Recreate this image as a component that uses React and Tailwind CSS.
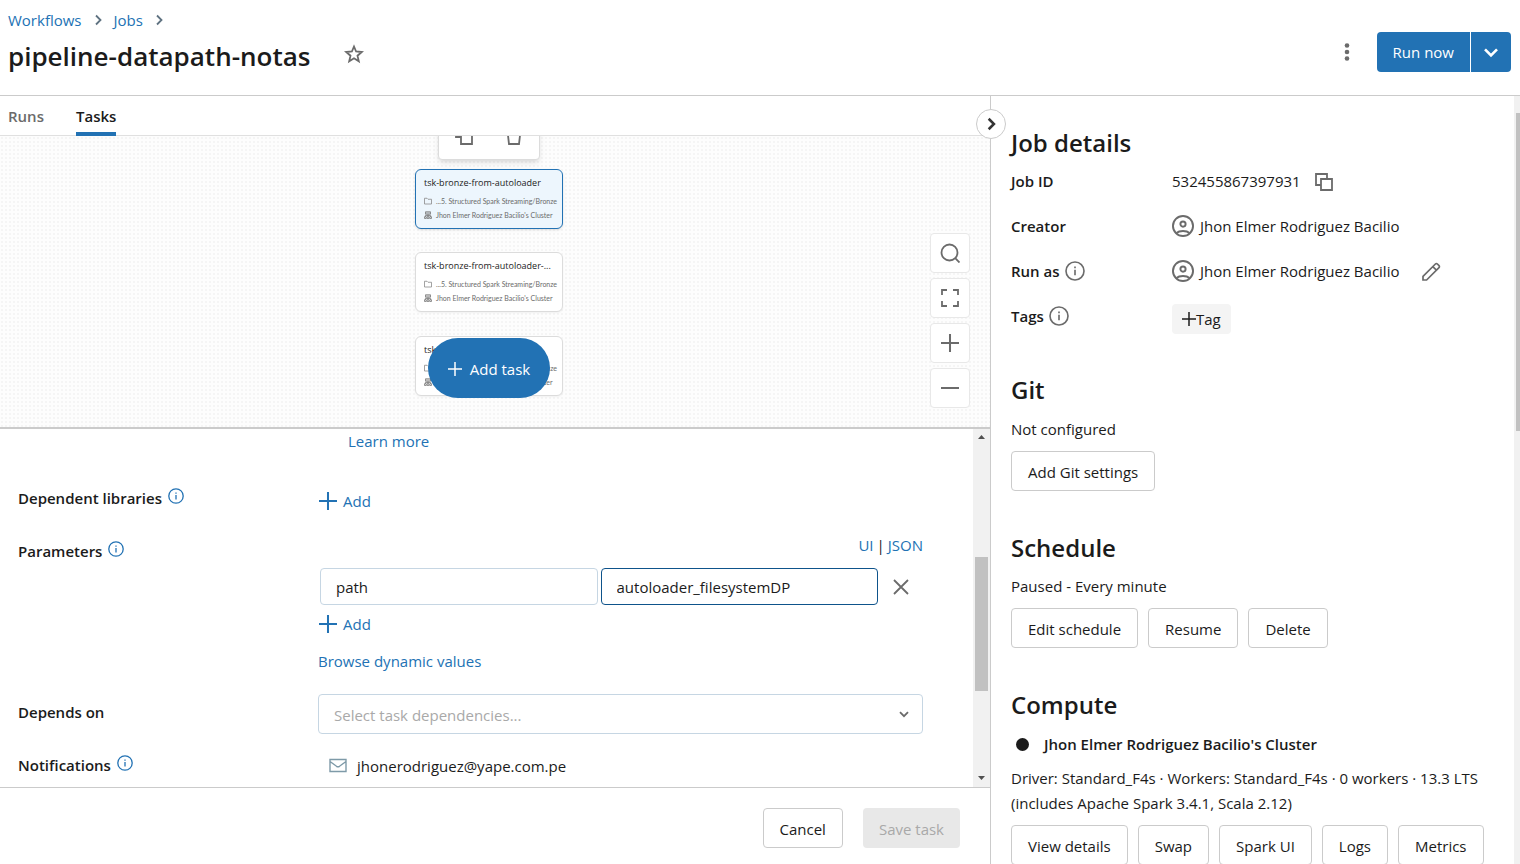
import React from "react";

const Svg = ({ size = 16, className = "", children, box = 16 }) => (
  <svg width={size} height={size} viewBox={`0 0 ${box} ${box}`} fill="none" stroke="currentColor" className={`shrink-0 ${className}`} aria-hidden="true">
    {children}
  </svg>
);

const Info = ({ size = 16, className = "" }) => (
  <Svg size={size} className={className}>
    <circle cx="8" cy="8" r="7.2" strokeWidth="1.3" />
    <path d="M8 7v4.4M8 4.4v1.4" strokeWidth="1.3" />
  </Svg>
);

const Plus = ({ size = 16, className = "", w = 1.8 }) => (
  <Svg size={size} className={className}>
    <path d="M8 0v16M0 8h16" strokeWidth={w} />
  </Svg>
);

const Chevron = ({ size = 12, className = "", d = "M4 1.5 8.5 6 4 10.5", w = 2 }) => (
  <Svg size={size} box={12} className={className}>
    <path d={d} strokeWidth={w} />
  </Svg>
);

const DOWN = "M1.5 4 6 8.5 10.5 4";
const DOWN_SMALL = "M2 4.2 6 8.2 10 4.2";

const User = () => (
  <Svg size={22} className="mb-0.5 text-[#6b6b6b]">
    <circle cx="8" cy="8" r="7.3" strokeWidth="1.4" />
    <circle cx="8" cy="6.6" r="1.9" strokeWidth="1.4" />
    <path d="M3.2 13.1C5.5 11.1 10.5 11.1 12.8 13.1" strokeWidth="1.4" />
  </Svg>
);

const Copy = () => (
  <Svg size={18} box={18} className="text-[#6b6b6b]">
    <path d="M6 12H1V1h11v5M6 6h11v11H6z" strokeWidth="1.8" />
  </Svg>
);

const Pencil = () => (
  <Svg size={20} box={20} className="text-[#6b6b6b]">
    <path d="M2 18v-3.6L14.4 2a1.4 1.4 0 0 1 2 0L18 3.6a1.4 1.4 0 0 1 0 2L5.600 18zM11.800 4.600l3.600 3.600" strokeWidth="1.7" />
  </Svg>
);

const Folder = () => (
  <Svg size={8} className="text-[#8a8a8a]">
    <path d="M1 2.500h5l2 2h7v9.500H1z" strokeWidth="1.6" />
  </Svg>
);

const Cluster = () => (
  <Svg size={8} className="text-[#7a7a7a]">
    <path d="M3 1.500h10v5H3zM3 4h10M8 6.500V9M2.700 12V9h10.600v3M8 9v3M1 11.500h3.500V15H1zM6.200 11.500h3.600V15H6.200zM11.500 11.500H15V15h-3.500z" strokeWidth="1.6" />
  </Svg>
);

const Btn = ({ children, className = "" }) => (
  <button type="button" className={`h-10 shrink-0 whitespace-nowrap rounded border border-[#cbcbcb] bg-white px-4 pt-0.5 ${className}`}>
    {children}
  </button>
);

const TaskNode = ({ title, selected, className }) => (
  <div
    className={`absolute left-[415px] flex h-[60px] w-[148px] flex-col rounded-md border px-2 pt-1.5 ${
      selected ? "border-[#2272b4] bg-[#edf6fd] shadow" : "border-[#dcdcdc] bg-white shadow-xs"
    } ${className}`}
  >
    <div className="whitespace-nowrap text-[9px] leading-[14px]">{title}</div>
    <div className="mt-1 flex items-center gap-1 whitespace-nowrap font-['Lato',sans-serif] text-[7px] leading-[14px] text-[#6b6b6b]">
      <Folder />
      ...5. Structured Spark Streaming/Bronze
    </div>
    <div className="flex items-center gap-1 whitespace-nowrap font-['Lato',sans-serif] text-[7px] leading-[14px] text-[#6b6b6b]">
      <Cluster />
      Jhon Elmer Rodriguez Bacilio's Cluster
    </div>
  </div>
);

const MapButton = ({ label, children }) => (
  <button type="button" aria-label={label} className="flex size-10 items-center justify-center rounded border border-[#e8e8e8] bg-white text-[#6b6b6b]">
    {children}
  </button>
);

const Detail = ({ label, info, children }) => (
  <div className="flex h-[45px] items-center">
    <div className="flex w-[161px] items-center gap-[5px] font-semibold">
      {label}
      {info && <Info size={20} className="mb-0.5 text-[#6b6b6b]" />}
    </div>
    {children}
  </div>
);

const FormLabel = ({ children, info, htmlFor }) => (
  <label htmlFor={htmlFor} className="flex w-[300px] shrink-0 items-start gap-1.5 font-semibold leading-6">
    {children}
    {info && <Info size={16} className="mt-0.5 text-[#2272b4]" />}
  </label>
);

const AddLink = () => (
  <button type="button" className="flex h-6 items-center gap-1.5 pl-px text-[#2272b4]">
    <Plus size={18} />
    Add
  </button>
);

const Heading = ({ children }) => <h2 className="text-2xl font-semibold leading-8">{children}</h2>;

export default function App() {
  return (
    <div className="flex h-screen flex-col overflow-hidden bg-white font-['Open_Sans','Noto_Sans',sans-serif] text-[15px] text-[#1b1b1b]">
      <header className="flex h-24 shrink-0 items-center justify-between border-b border-[#cbcbcb] pl-2 pr-[9px]">
        <div className="flex h-full flex-col pt-2">
          <nav className="flex h-6 items-center gap-2.5 text-[#2272b4]">
            <a href="#workflows">Workflows</a>
            <Chevron className="text-[#5f7281]" w={1.8} />
            <a href="#jobs">Jobs</a>
            <Chevron className="text-[#5f7281]" w={1.8} />
          </nav>
          <div className="mt-1 flex h-10 items-center gap-[34px]">
            <h1 className="whitespace-nowrap text-[26px] font-semibold leading-10">pipeline-datapath-notas</h1>
            <button type="button" aria-label="Favorite" className="mb-1">
              <Svg size={20} box={20} className="text-[#6b6b6b]">
                <path d="m10 2.500 2.100 5 5.700.5-4.300 3.700 1.300 5.600L10 14.300l-4.800 3 1.300-5.600L2.200 8l5.700-.5z" strokeWidth="1.8" />
              </Svg>
            </button>
          </div>
        </div>
        <div className="mt-2 flex items-center gap-5">
          <button type="button" aria-label="More actions" className="flex size-5 items-center justify-center text-[#6b6b6b]">
            <svg width="6" height="20" viewBox="0 0 6 20" fill="currentColor" aria-hidden="true">
              <circle cx="3" cy="3.500" r="2.300" />
              <circle cx="3" cy="10" r="2.300" />
              <circle cx="3" cy="16.500" r="2.300" />
            </svg>
          </button>
          <div className="flex gap-px">
            <button type="button" className="h-10 rounded-l bg-[#2272b4] px-4 pt-0.5 text-white">Run now</button>
            <button type="button" aria-label="Run options" className="flex h-10 w-10 items-center justify-center rounded-r bg-[#2272b4] text-white">
              <Chevron size={16} d={DOWN} w={2} />
            </button>
          </div>
        </div>
      </header>

      <div className="flex min-h-0 flex-1">
        <main className="flex min-w-0 flex-1 flex-col">
          <div className="flex h-10 shrink-0 gap-8 border-b border-[#e0e0e0] pl-2 font-semibold">
            <button type="button" className="h-10 text-[#6b6b6b]">Runs</button>
            <button type="button" className="h-10 border-b-4 border-[#2272b4] pt-1">Tasks</button>
          </div>

          <section className="relative h-[293px] shrink-0 overflow-hidden border-b-2 border-[#cbcbcb] bg-[#fdfdfd] bg-[radial-gradient(#f5f5f5_1px,transparent_1px)] bg-[size:4px_4px]">
            <div className="absolute left-[438px] top-[-16px] flex h-10 w-[102px] items-center justify-center gap-8 rounded border border-[#dcdcdc] bg-white pb-2 text-[#6b6b6b] shadow-md">
              <Svg size={18} box={18}>
                <path d="M6 10H1V1h10v4M6 5h11v12H6z" strokeWidth="1.800" />
              </Svg>
              <Svg size={18} box={18}>
                <path d="M1 4h16M2.500 4l1.500 13h10l1.500-13M6 4V1h6v3" strokeWidth="1.800" />
              </Svg>
            </div>
            <TaskNode title="tsk-bronze-from-autoloader" selected className="top-[33px]" />
            <TaskNode title="tsk-bronze-from-autoloader-..." className="top-[116px]" />
            <TaskNode title="tsk-silver-from-bronze" className="top-[200px]" />
            <button type="button" className="absolute left-[428px] top-[202px] flex h-[60px] w-[122px] items-center justify-center gap-2 rounded-full bg-[#2272b4] pt-0.5 text-white">
              <Plus size={14} w={1.7} />
              Add task
            </button>
            <div className="absolute right-5 top-[97px] flex flex-col gap-[5px]">
              <MapButton label="Search">
                <Svg size={20} box={20}>
                  <circle cx="9.500" cy="9.500" r="8" strokeWidth="1.800" />
                  <path d="m15.200 15.200 4.300 4.300" strokeWidth="1.800" />
                </Svg>
              </MapButton>
              <MapButton label="Fit to screen">
                <Svg size={18} box={18}>
                  <path d="M1 6V1h5M12 1h5v5M17 12v5h-5M6 17H1v-5" strokeWidth="1.800" />
                </Svg>
              </MapButton>
              <MapButton label="Zoom in">
                <Plus size={18} />
              </MapButton>
              <MapButton label="Zoom out">
                <Svg size={18}>
                  <path d="M0 8h16" strokeWidth="1.800" />
                </Svg>
              </MapButton>
            </div>
          </section>

          <div className="flex min-h-0 flex-1">
            <form className="flex min-w-0 flex-1 flex-col overflow-hidden pl-[18px] pr-[50px]">
              <a href="#learn" className="ml-[330px] h-6 leading-6 text-[#2272b4]">Learn more</a>
              <div className="mt-[33px] flex">
                <FormLabel info>Dependent libraries</FormLabel>
                <div className="pt-[3px]">
                  <AddLink />
                </div>
              </div>
              <div className="mt-5 flex">
                <div className="pt-1.5">
                  <FormLabel info htmlFor="param-key">Parameters</FormLabel>
                </div>
                <div className="min-w-0 flex-1">
                  <div className="flex h-6 items-center justify-end gap-[3px]">
                    <a href="#ui" className="text-[#2272b4]">UI</a>
                    <span>|</span>
                    <a href="#json" className="text-[#2272b4]">JSON</a>
                  </div>
                  <div className="mt-[11px] flex items-center gap-[3px] pl-0.5">
                    <input id="param-key" defaultValue="path" className="h-[37px] min-w-0 flex-1 rounded border border-[#c6d6e3] px-[15px] outline-none" />
                    <input aria-label="Parameter value" defaultValue="autoloader_filesystemDP" className="h-[37px] min-w-0 flex-1 rounded border border-[#0e538b] px-[15px] outline-none" />
                    <button type="button" aria-label="Remove parameter" className="flex w-[42px] items-center justify-center pr-0.5 text-[#6b6b6b]">
                      <Svg size={16}>
                        <path d="m1 1 14 14M15 1 1 15" strokeWidth="1.800" />
                      </Svg>
                    </button>
                  </div>
                  <div className="mt-[7px]">
                    <AddLink />
                  </div>
                  <a href="#dynamic" className="mt-[13px] block h-6 leading-6 text-[#2272b4]">Browse dynamic values</a>
                </div>
              </div>
              <div className="mt-[21px] flex">
                <div className="pt-1.5">
                  <FormLabel htmlFor="depends">Depends on</FormLabel>
                </div>
                <div className="grid min-w-0 flex-1 items-center">
                  <select id="depends" defaultValue="" className="col-start-1 row-start-1 h-10 appearance-none rounded border border-[#c6d6e3] bg-white px-[15px] pt-0.5 text-[#a9a9a9]">
                    <option value="">Select task dependencies...</option>
                  </select>
                  <Chevron className="pointer-events-none col-start-1 row-start-1 mr-[13px] justify-self-end text-[#6b6b6b]" d={DOWN_SMALL} w={1.8} />
                </div>
              </div>
              <div className="mt-[19px] flex">
                <FormLabel info>Notifications</FormLabel>
                <div className="flex h-6 items-center gap-2.5 pl-[11px] pt-0.5">
                  <Svg size={18} box={18} className="text-[#7e9aa8]">
                    <path d="M1 2.500h16v12H1zM1 4.500 7.500 9.300q1.500 1 3 0L17 4.500" strokeWidth="1.400" />
                  </Svg>
                  jhonerodriguez@yape.com.pe
                </div>
              </div>
            </form>
            <div className="flex w-[17px] shrink-0 flex-col items-center bg-[#f1f1f1] text-[#505050]">
              <svg width="7" height="17" viewBox="0 0 7 17" fill="currentColor" aria-hidden="true">
                <path d="M0 10h7L3.500 6z" />
              </svg>
              <div className="mt-[111px] h-[134px] w-[13px] bg-[#c1c1c1]" />
              <svg width="7" height="17" viewBox="0 0 7 17" fill="currentColor" className="mt-auto" aria-hidden="true">
                <path d="M0 6h7l-3.500 4z" />
              </svg>
            </div>
          </div>

          <footer className="flex h-[77px] shrink-0 items-start justify-end gap-5 border-t border-[#cbcbcb] pr-[30px] pt-5">
            <Btn>Cancel</Btn>
            <button type="button" disabled className="h-10 rounded bg-[#e8e8e8] px-4 pt-0.5 text-[#a9a9a9]">Save task</button>
          </footer>
        </main>

        <aside className="relative flex w-[530px] shrink-0 border-l border-[#cbcbcb]">
          <button type="button" aria-label="Collapse panel" className="absolute left-[-15px] top-[13px] flex size-[30px] items-center justify-center rounded-full border border-[#cbcbcb] bg-white text-[#333]">
            <Chevron size={14} w={2.2} />
          </button>
          <div className="min-w-0 flex-1 overflow-hidden pl-5 pr-5 pt-[31px]">
            <Heading>Job details</Heading>
            <Detail label="Job ID">
              <span>532455867397931</span>
              <button type="button" aria-label="Copy job ID" className="ml-3.5">
                <Copy />
              </button>
            </Detail>
            <Detail label="Creator">
              <div className="flex items-center gap-1.5">
                <User />
                Jhon Elmer Rodriguez Bacilio
              </div>
            </Detail>
            <Detail label="Run as" info>
              <div className="flex items-center gap-1.5">
                <User />
                Jhon Elmer Rodriguez Bacilio
              </div>
              <button type="button" aria-label="Edit run as" className="ml-[22px]">
                <Pencil />
              </button>
            </Detail>
            <Detail label="Tags" info>
              <button type="button" className="mt-1 flex h-[30px] items-center rounded bg-[#f4f4f4] px-2.5">
                <Plus size={14} w={1.7} />
                <span className="pt-0.5">Tag</span>
              </button>
            </Detail>

            <div className="mt-[35px]">
              <Heading>Git</Heading>
              <p className="mt-[11px] leading-6">Not configured</p>
              <Btn className="mt-2.5">Add Git settings</Btn>
            </div>

            <div className="mt-[41px]">
              <Heading>Schedule</Heading>
              <p className="mt-2.5 leading-6">Paused - Every minute</p>
              <div className="mt-2.5 flex gap-2.5">
                <Btn>Edit schedule</Btn>
                <Btn>Resume</Btn>
                <Btn>Delete</Btn>
              </div>
            </div>

            <div className="mt-[41px]">
              <Heading>Compute</Heading>
              <div className="mt-[11px] flex h-6 items-center gap-[15px] pl-[5px] font-semibold">
                <span className="size-[13px] rounded-full bg-[#1b1b1b]" />
                Jhon Elmer Rodriguez Bacilio's Cluster
              </div>
              <p className="mt-2.5 leading-[25px]">
                Driver: Standard_F4s · Workers: Standard_F4s · 0 workers · 13.3 LTS (includes Apache Spark 3.4.1, Scala 2.12)
              </p>
              <div className="mt-[9px] flex gap-2.5">
                <Btn>View details</Btn>
                <Btn>Swap</Btn>
                <Btn>Spark UI</Btn>
                <Btn>Logs</Btn>
                <Btn>Metrics</Btn>
              </div>
            </div>
          </div>
          <div className="flex w-1.5 shrink-0 flex-col items-end bg-[#f1f1f1] pt-[17px]">
            <div className="h-[318px] w-1 bg-[#c1c1c1]" />
          </div>
        </aside>
      </div>
    </div>
  );
}
